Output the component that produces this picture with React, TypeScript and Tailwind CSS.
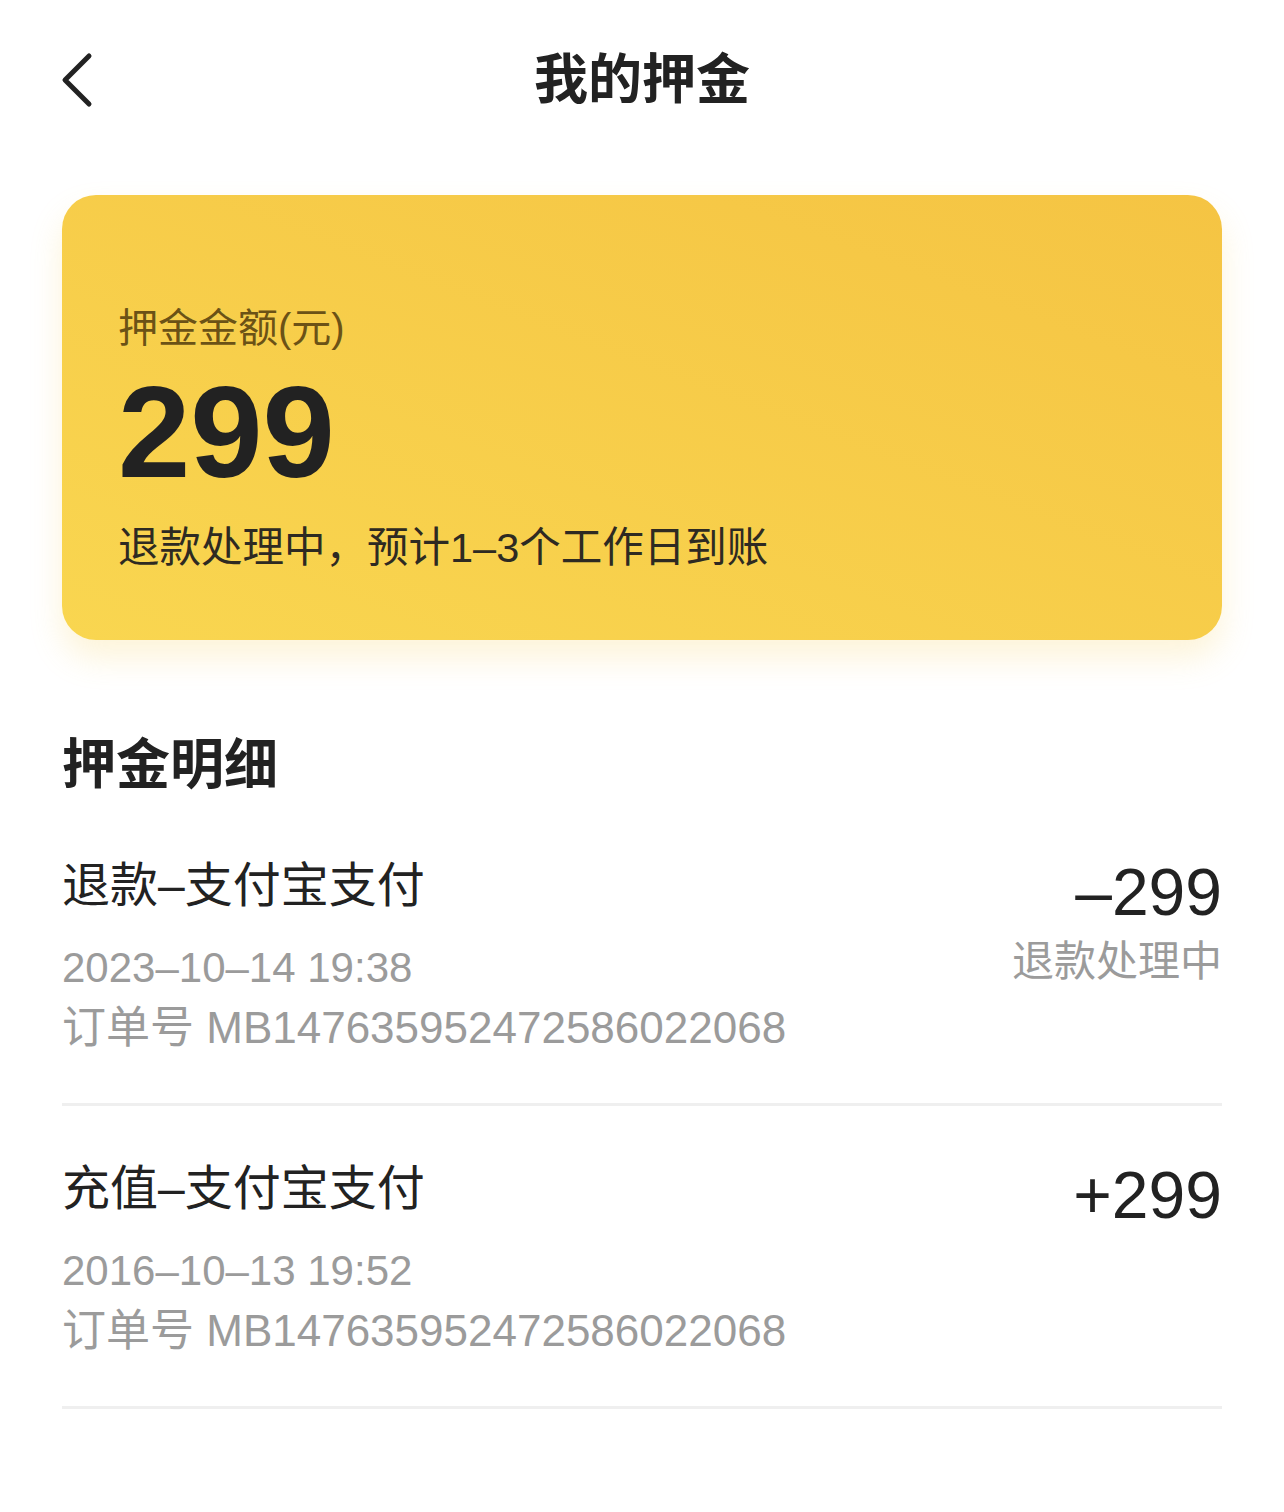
const records = [
  {
    title: "退款–支付宝支付",
    time: "2023–10–14 19:38",
    order: "MB147635952472586022068",
    amount: "–299",
    status: "退款处理中",
  },
  {
    title: "充值–支付宝支付",
    time: "2016–10–13 19:52",
    order: "MB147635952472586022068",
    amount: "+299",
    status: "",
  },
]

const font = { fontFamily: '"Liberation Sans", "Noto Sans CJK SC", sans-serif' }

export default function App() {
  return (
    <div className="min-h-screen w-full bg-white text-[#222]" style={font}>
      {/* header */}
      <div className="grid h-[160px] grid-cols-[1fr_auto_1fr] items-center px-[60px]">
        <button className="flex h-[60px] w-[40px] items-center">
          <svg width="34" height="56" viewBox="0 0 34 56" fill="none">
            <path d="M29 4 L5 28 L29 52" stroke="#222" strokeWidth="5" strokeLinecap="round" strokeLinejoin="round" />
          </svg>
        </button>
        <h1 className="text-[54px] font-bold leading-none">我的押金</h1>
        <div />
      </div>

      <div className="px-[62px]">
        {/* deposit card */}
        <div className="mt-[35px] h-[445px] rounded-[34px] bg-gradient-to-tr from-[#f9d650] to-[#f5c443] px-[56px] pt-[113px] shadow-[0_18px_32px_rgba(246,205,80,0.22)]">
          <p className="text-[40px] leading-[40px] text-[#6b5216]">押金金额(元)</p>
          <p className="mt-[19px] text-[130px] font-bold leading-none text-[#222]">299</p>
          <p className="mt-[30px] text-[41.5px] leading-[42px] text-[#2e2a22]">退款处理中，预计1–3个工作日到账</p>
        </div>

        <h2 className="mt-[98px] mb-[11px] text-[54px] font-bold leading-none">押金明细</h2>

        {records.map((r, i) => (
          <div key={i} className="flex items-start justify-between border-b-[3px] border-[#efefef] pt-[59px] pb-[53px]">
            <div className="flex flex-col">
              <p className="text-[48px] leading-[48px] text-[#222]">{r.title}</p>
              <p className="mt-[37px] text-[42px] leading-[42px] text-[#9b9b9b]">{r.time}</p>
              <p className="mt-[17px] text-[44px] leading-[44px] text-[#9b9b9b]">
                订单号 {r.order}
              </p>
            </div>
            <div className="-mt-[2px] flex flex-col items-end">
              <p className="text-[66px] leading-[64px] text-[#222]">{r.amount}</p>
              {r.status && (
                <p className="mt-[17px] text-[42px] leading-[42px] text-[#9b9b9b]">{r.status}</p>
              )}
            </div>
          </div>
        ))}
      </div>
    </div>
  )
}
